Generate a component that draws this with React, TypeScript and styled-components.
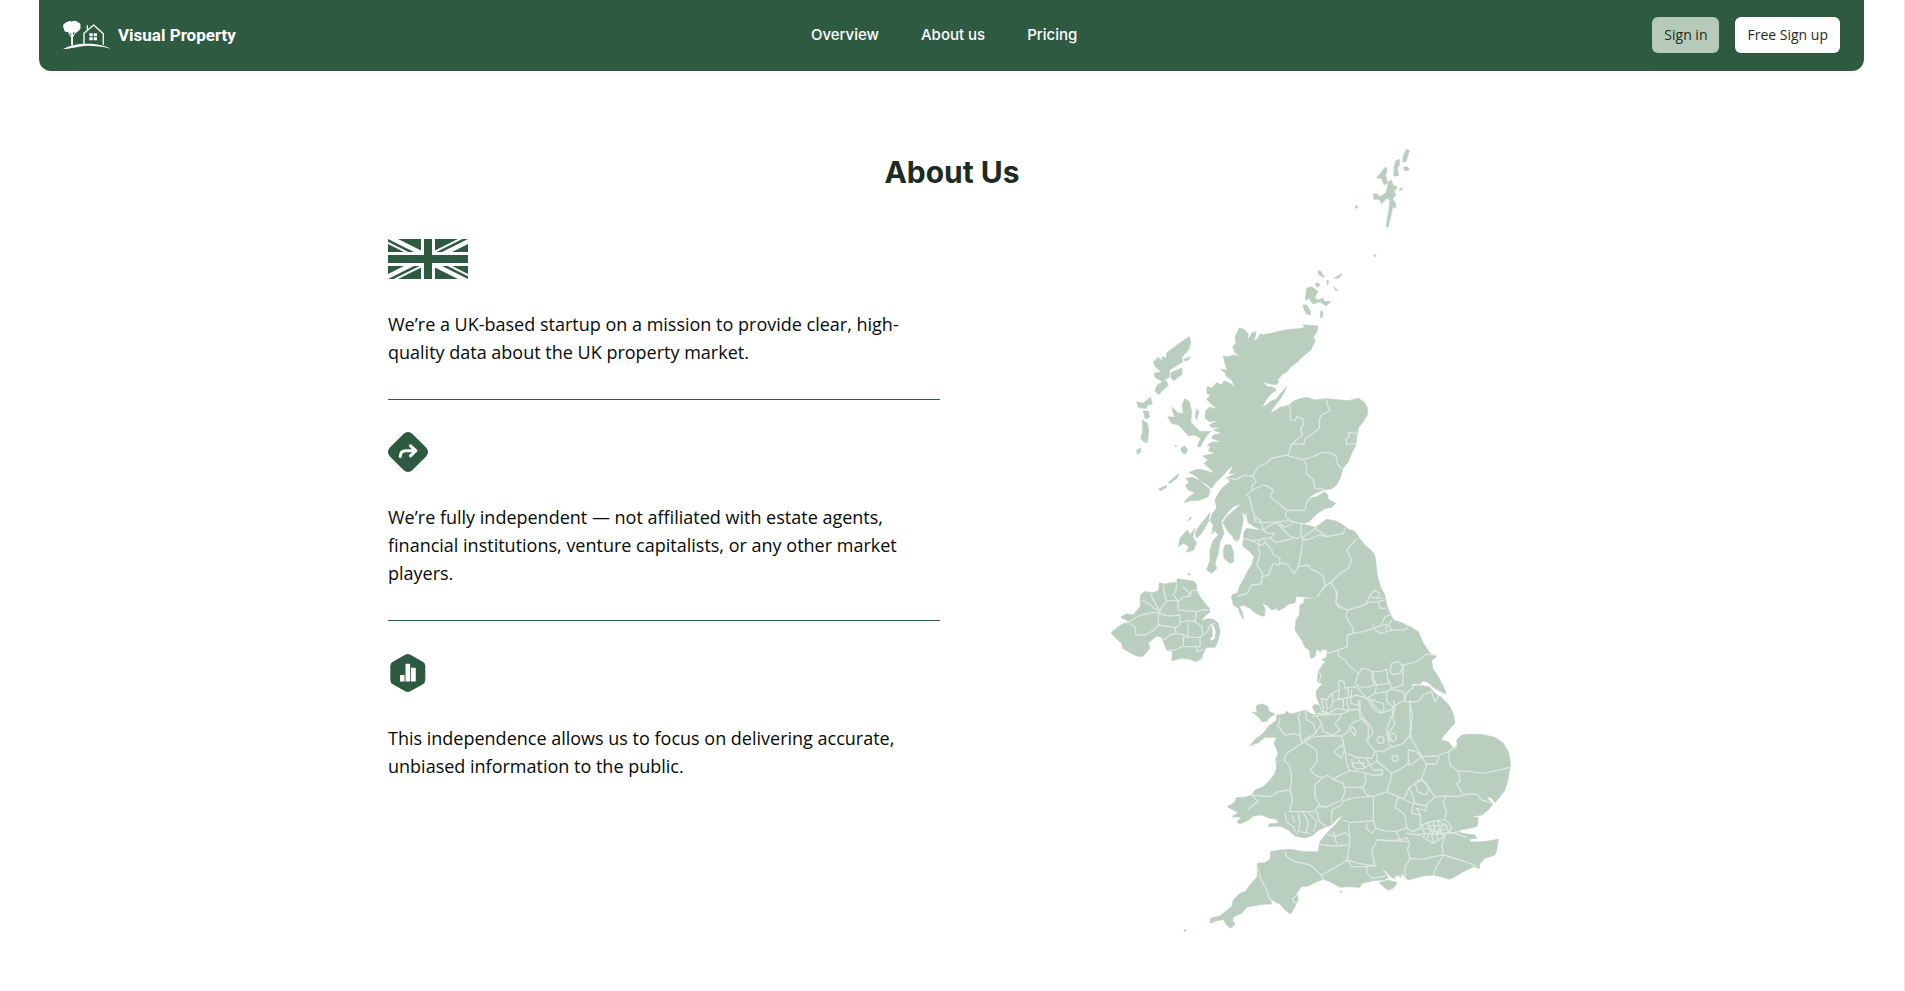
import React from 'react';
import styled, { createGlobalStyle } from 'styled-components';

const colors = {
  forest: '#2f5a42',
  sage: '#b5cab7',
  land: '#b9cebe',
  border: '#dce7df',
  heading: '#1d2b23',
  text: '#050a07',
  line: '#e6e6e6',
};

const GlobalStyle = createGlobalStyle`
  *, *::before, *::after { box-sizing: border-box; }
  body {
    margin: 0;
    background: #fff;
    color: ${colors.text};
    font-family: 'Open Sans', 'Noto Sans', sans-serif;
  }
`;

const Page = styled.div`
  min-height: 100vh;
  border-right: 1px solid ${colors.line};
`;

const Header = styled.header`
  display: flex;
  align-items: center;
  justify-content: space-between;
  margin: 0 40px 0 39px;
  padding: 17px 24px 18px;
  border-radius: 0 0 12px 12px;
  background: ${colors.forest};
`;

const Brand = styled.a`
  display: flex;
  align-items: center;
  gap: 7px;
  color: #fff;
  font: 700 17px/24px Roboto, sans-serif;
  text-decoration: none;
`;

const BrandMark = styled.svg`
  display: block;
  width: 48px;
  height: 30px;
`;

const Nav = styled.nav`
  display: flex;
  gap: 42px;
`;

const NavLink = styled.a`
  color: #fff;
  font: 500 15px/24px Inter, sans-serif;
  text-decoration: none;
`;

const Actions = styled.div`
  display: flex;
  gap: 16px;
`;

const ActionButton = styled.button<{ $muted?: boolean }>`
  height: 36px;
  padding: 0 12px;
  border: 0;
  border-radius: 6px;
  background: ${(p) => (p.$muted ? colors.sage : '#fff')};
  color: ${colors.heading};
  font: 500 14px/20px 'Open Sans', sans-serif;
  cursor: pointer;
`;

const Main = styled.main`
  display: grid;
  grid-template-columns: 1fr 1fr;
  grid-template-rows: auto 1fr;
  column-gap: 24px;
  max-width: 1128px;
  margin: 0 auto;
  padding-top: 59px;
`;

const Title = styled.h1`
  grid-area: 1 / 1 / 2 / 3;
  margin: 0;
  padding: 22px 0 47px;
  color: ${colors.heading};
  font: 700 30px/40px Inter, sans-serif;
  text-align: center;
`;

const Points = styled.ul`
  grid-area: 2 / 1 / 3 / 2;
  margin: 0;
  padding: 0;
  list-style: none;
`;

const Point = styled.li`
  padding-bottom: 33px;

  & + & {
    padding-top: 32px;
    border-top: 1px solid ${colors.forest};
  }
`;

const PointIcon = styled.svg<{ $wide?: boolean }>`
  display: block;
  width: ${(p) => (p.$wide ? 80 : 40)}px;
  height: 40px;
`;

const PointText = styled.p`
  margin: 31px 0 0;
  font-size: 18px;
  line-height: 28px;
`;

const MapDrawing = styled.svg`
  grid-area: 1 / 2 / 3 / 3;
  justify-self: end;
  display: block;
  width: 100%;
  max-width: 416px;
`;

type Sheet = { x: number; y: number; land: string[]; borders: string[] };

/* The map is kept in sheets, each with its own origin. */
const sheets: Sheet[] = [
  {
    // Shetland and Orkney
    x: 570,
    y: 0,
    land: [
      '340,75 350,58 358,62 348,95 338,95',
      '318,92 328,88 328,105 322,115 326,138 312,138 312,112',
      '340,112 352,110 358,120 344,122',
      '275,125 285,112 292,118 287,135 292,160 282,164 275,145 260,144',
      '295,155 305,150 308,165 322,172 312,185 318,195 308,205 318,225 316,235 308,230 302,262 294,292 288,288 296,245 300,210 290,205 275,222 268,208 252,208 250,192 262,192 270,200 288,188 292,175',
      '328,178 336,173 338,177 330,182',
      '195,230 200,226 205,231 199,236',
      '252,376 256,373 258,378 254,380',
      '50,475 65,470 84,485 75,500 80,510 98,505 105,515 122,515 108,528 90,515 68,522 58,505 46,510',
      '38,525 50,525 62,545 60,555 50,552 42,538',
      '90,545 98,543 98,561 92,563',
      '76,462 84,458 90,466 82,472',
      '84,422 92,424 104,442 98,440 86,434',
      '132,446 148,434 157,431 147,444',
      '130,468 142,480 138,483',
      '110,452 116,452 113,466',
    ],
    borders: [],
  },
  {
    // Scotland
    x: 0,
    y: 570,
    land: [
      '418,24 432,28 445,42 442,60 450,50 456,38 468,36 466,50 460,62 472,58 480,42 490,44 520,38 545,32 570,28 600,26 615,22 608,14 628,16 654,18 650,36 640,52 646,62 632,90 618,102 605,112 590,128 575,138 560,156 545,164 535,178 527,176 536,184 530,194 510,192 490,186 498,198 520,202 530,210 515,220 500,238 485,262 500,254 512,244 530,236 540,222 560,200 552,218 540,238 522,260 510,280 525,272 540,262 565,256 580,244 600,236 620,232 645,240 680,236 720,240 745,242 775,235 792,246 802,262 803,282 790,305 776,322 770,350 768,375 755,400 745,425 728,446 722,470 712,492 695,506 672,510 650,518 622,534 650,530 672,516 682,522 685,538 707,550 695,562 675,566 655,578 640,592 630,604 612,610 590,606 570,600 572,606 600,612 625,616 645,622 660,612 680,598 705,602 725,612 745,628 765,634 778,655 795,675 812,690 825,710 828,740 832,770 842,800 855,830 862,872 650,872 655,835 590,828 560,835 412,828 420,795 435,775 445,750 455,735 462,712 450,695 428,678 430,655 432,635 440,625 470,629 492,631 465,622 445,608 440,590 444,572 436,586 425,572 430,600 425,625 418,655 410,665 400,640 390,628 392,645 380,628 368,608 380,590 400,572 425,552 402,558 385,575 363,605 372,640 360,665 355,700 345,730 350,745 335,760 320,750 330,720 330,690 340,660 355,645 345,632 335,642 340,615 330,602 338,580 350,565 345,540 355,520 370,500 390,485 380,474 412,456 388,462 400,436 385,448 365,470 345,490 335,505 318,492 300,482 290,470 268,457 290,448 310,450 345,460 325,442 312,430 325,420 308,408 325,404 345,400 325,392 330,382 350,386 322,376 335,366 365,366 335,355 340,345 366,340 340,330 362,322 335,322 328,315 358,300 330,305 315,295 318,270 330,262 352,268 330,248 320,238 330,226 320,218 322,198 335,205 350,188 365,195 372,182 390,190 405,202 395,180 380,170 375,158 362,148 382,150 375,130 370,108 385,110 400,105 422,110 405,98 398,80 408,70 405,52',
      '258,475 280,472 300,484 330,508 325,530 300,540 270,542 252,548 262,535 285,518 265,510 256,495 268,490',
      '330,578 325,605 305,640 290,655 285,640 300,615',
      '285,625 278,650 290,670 280,690 258,697 268,680 250,670 235,680 240,655 262,630 270,645',
      '375,675 392,674 400,695 402,725 390,730 372,715 370,690',
      '388,614 398,630 410,655 404,662 392,640',
      '255,236 268,245 275,275 272,305 285,320 300,335 332,334 318,350 300,382 292,378 302,355 285,345 265,347 250,330 235,315 215,310 203,290 224,292 215,262 235,280 250,280 246,255',
      '290,266 296,275 290,300 286,290',
      '268,50 272,70 265,90 245,112 248,125 225,140 208,150 208,172 195,178 205,195 190,210 175,224 165,212 172,195 188,185 165,172 162,160 185,155 165,140 160,125 175,112 190,125 185,110 200,115 200,98 225,80 245,65',
      '212,158 245,145 247,162 222,182 214,176',
      '252,118 270,110 268,118 256,124',
      '110,245 130,250 142,240 152,232 157,252 142,256 138,266 115,262',
      '130,272 146,274 148,292 136,297',
      '126,300 142,310 146,330 142,368 130,364 122,355 128,335',
      '110,390 122,384 122,396 112,403',
      '243,385 253,377 263,389 256,403 246,397',
      '225,376 231,378 228,382',
      '175,508 198,496 200,502 182,512',
      '205,488 236,460 232,474 210,490',
      '264,602 272,590 274,596',
      '262,760 272,762 268,766',
    ],
    borders: [
      '568,256 572,280 570,298 585,302 590,290 608,296 610,315 602,325 608,345 590,360 575,372 612,372 615,358 640,340 658,325 658,300 665,285 690,272 682,255 680,238',
      '575,372 565,404',
      '771,340 745,338 748,352 738,356 740,374 768,370',
      '375,475 410,478 430,466 458,468 475,440 495,432 515,415 560,405 580,412 610,418 640,410 665,398 690,398 708,408 712,430 724,446',
      '610,418 620,435 618,460 640,480 645,505 672,508',
      '458,468 468,485 455,498 458,510 440,525 450,535 455,560 462,580 465,605',
      '458,510 490,495 505,500 520,510 510,530 535,550 560,570 590,572 615,570 620,545 635,533',
      '560,570 556,590 572,602',
      '465,605 490,608 530,606 568,602',
      '465,590 482,602 490,630',
      '430,655 455,662 478,658 490,655 510,655 525,640 500,640 490,630 510,615 530,608',
      '530,606 550,630 570,648 590,655 605,650 602,625 605,612',
      '540,612 555,622 580,610',
      '510,655 530,668 560,660 580,655',
      '605,655 625,640 650,622',
      '605,655 620,660 660,645 680,650 730,640 735,625',
      '645,625 680,648',
      '608,655 605,690 595,740 582,762 565,735 545,728 535,735 520,730 505,765 488,770 482,792 455,795 440,822 412,828',
      '478,658 475,680 480,705 470,735 488,760 484,790',
      '490,658 515,690 520,705 540,715 538,730',
      '455,662 480,675 500,668',
      '595,740 625,735 632,748 650,755 670,768 675,798 650,832',
      '772,655 740,690 755,720 745,745 720,760 692,788 672,800',
      '692,788 712,820 708,850 720,866',
    ],
  },
  {
    // Northern Ireland, Galloway and Cumbria
    x: 0,
    y: 1290,
    land: [
      '33,218 55,200 72,190 88,185 62,172 78,162 100,164 120,140 122,105 132,95 160,98 176,92 178,68 195,72 215,68 230,68 232,56 255,60 282,64 290,75 290,92 300,110 315,130 328,145 328,158 310,172 305,182 325,176 340,178 355,190 360,215 355,240 345,262 320,262 310,280 305,295 288,305 270,298 245,295 215,302 218,275 200,270 190,245 185,232 170,228 155,240 145,250 150,265 135,282 128,290 110,288 85,275 68,265 65,250 45,232',
      '500,-5 462,12 440,40 425,70 412,100 400,102 394,110 400,135 415,145 422,165 430,178 428,160 418,140 430,135 450,145 468,160 485,168 494,168 495,145 485,130 500,135 515,150 530,145 535,152 555,142 565,132 585,128 588,108 625,110 655,112 710,60 750,-5',
      '665,104 650,116 612,116 612,128 600,135 598,165 588,180 585,210 605,240 615,262 628,270 632,295 645,290 650,266 660,276 668,268 682,270 680,290 665,300 680,305 668,312 665,322 655,330 652,365 667,372 650,390 648,405 655,425 668,452 690,457 712,445 690,470 880,470 800,260 800,60 710,50',
      '638,438 655,434 662,446 666,466 652,462',
    ],
    borders: [
      '75,190 95,182 110,170 135,162 180,155 160,120 152,100',
      '88,190 105,200 108,225 135,225 160,212 175,195 175,160 190,135 205,122 232,122 235,150',
      '190,75 194,108 200,125',
      '180,150 162,145 145,130 125,120',
      '230,70 228,92 220,105 235,125 250,112 270,108 275,92 290,90',
      '248,80 268,98 268,108',
      '175,160 205,168 240,165 240,195 225,202 175,195',
      '235,150 290,155 305,150 326,150',
      '240,188 265,182 285,185 290,155',
      '225,202 228,220 210,225 190,240',
      '262,190 266,228 228,220',
      '250,230 250,258 225,270 200,272',
      '250,232 300,232 300,260 250,260',
      '300,232 322,215 330,195 345,190',
      '285,185 305,200 308,228',
      '290,262 290,275 312,268',
    ],
  },
  {
    // Eastern side from Berwick to the Wash
    x: 330,
    y: 1110,
    land: [
      '440,110 465,145 492,160 498,190 500,220 510,265 522,280 528,310 538,335 550,360 575,368 600,380 625,395 640,430 660,460 680,470 665,480 668,505 685,530 705,570 708,582 690,574 670,562 655,548 640,542 630,552 610,552 600,560 625,556 658,560 675,580 695,595 715,615 728,640 734,670 715,690 695,712 690,740 380,740 400,450 340,290 380,110',
    ],
    borders: [
      '380,270 378,310 400,325 412,330 450,320 470,310 480,285 495,270',
      '470,308 505,305 524,300',
      '478,288 500,296 520,292',
      '492,272 510,280 500,296',
      '505,305 510,325 527,325',
      '412,330 408,350 415,365 430,385 428,400 460,395 490,385 515,375 525,350 540,345',
      '428,400 412,405 412,440 385,450 350,460',
      '488,375 495,390 512,400 540,392 590,388 592,380',
      '545,360 535,375 548,392',
      '515,378 530,372 528,390',
      '385,455 385,468 405,480 420,500 445,520',
      '680,467 650,462 620,485 600,490 580,495 578,555',
      '445,522 455,505 475,508 485,515 510,515 530,508 535,550 500,555 492,540 490,520',
      '540,515 545,490 565,485 578,500 570,520 550,524 540,515',
      '445,522 435,550 448,560 470,562 495,555 485,535 488,515',
      '445,565 470,595 495,580 500,555',
      '495,580 530,575 545,565 580,555',
      '535,540 545,565',
      '470,595 490,625 510,640 522,630 520,610 500,605 475,595',
      '530,575 530,605 550,620 585,600 580,575 548,568',
      '585,600 590,580 610,562',
      '580,605 600,605 625,605 640,585 665,575 675,605 685,590',
      '598,605 608,650 600,690 605,720',
      '445,600 450,650 475,680 475,720',
      '548,620 548,650 555,670 535,700 545,720',
      '330,595 350,600 365,580 388,570 385,545 395,540 402,548 405,565 430,560 445,565',
      '365,580 370,600 362,625',
      '388,565 385,595 400,600 400,630',
      '415,560 415,590 410,610 418,630',
      '320,640 355,640 380,625 420,632 448,626',
      '425,570 422,610 445,615',
      '365,605 385,598 425,590 440,585 470,595',
      '348,600 352,632',
      '335,600 342,630',
      '325,510 333,528 326,548',
    ],
  },
  {
    // Wales and southern England
    x: 210,
    y: 1710,
    land: [
      '262,15 278,12 292,18 298,35 315,42 300,52 290,64 275,65 265,50 245,36 262,38 258,22',
      '320,45 345,42 350,34 360,42 380,38 405,30 425,42 440,45 428,22 435,12 450,36 475,40 480,-10 812,-10 840,20 850,45 854,68 840,85 820,108 813,120 835,125 850,145 862,135 860,120 875,105 900,103 940,104 975,112 1000,130 1015,155 1022,190 1015,235 1005,270 990,290 975,308 962,292 950,292 968,312 955,330 935,345 915,348 900,352 925,352 922,378 900,385 870,390 870,398 915,405 920,415 895,418 905,426 940,425 985,418 980,450 975,465 945,475 930,490 928,505 910,500 880,515 840,538 815,530 790,525 760,528 715,540 705,532 695,520 692,534 685,522 680,530 672,522 676,538 660,528 645,512 635,508 650,525 655,534 640,540 610,542 575,550 570,562 535,560 510,562 480,545 460,538 440,545 415,558 395,560 380,580 385,598 372,625 362,642 345,630 330,612 315,605 300,595 305,612 290,612 265,615 250,618 230,622 215,640 190,650 188,662 195,672 182,685 170,675 160,658 140,662 120,670 122,655 150,648 165,635 185,620 190,600 210,580 225,575 240,555 262,530 262,490 285,488 300,478 302,455 330,450 360,448 400,455 445,455 450,425 470,400 500,370 522,343 500,358 485,374 465,382 445,390 430,405 405,414 375,408 355,390 330,378 295,380 298,372 325,370 320,358 300,355 275,345 250,348 235,360 210,372 200,365 215,352 185,350 205,338 172,320 190,310 200,293 225,292 245,285 255,270 280,260 300,240 315,220 320,200 318,186 340,180 315,182 325,160 312,130 320,112 285,112 265,128 240,137 255,118 280,100 295,80 320,60',
      '628,548 655,540 682,548 670,564 655,570 642,562',
      '42,690 46,688 48,694 44,695',
      '510,574 516,572 514,578',
    ],
    borders: [
      '330,55 325,80 345,105 375,100 390,108 390,75 385,50 390,38',
      '405,30 410,60 430,70 438,100 410,115 395,130 350,160 342,180 360,200 365,235 360,270 368,300 358,335',
      '390,100 395,130',
      '440,48 455,70 438,98',
      '455,75 460,95 490,105 510,90 495,70 515,45',
      '425,50 450,45 515,42 545,28 570,30',
      '395,130 420,115 435,110 470,108 515,108 525,150 530,190 540,212 510,225 490,238 472,225 455,235',
      '405,128 440,150 442,185 420,210 440,228 455,232',
      '490,155 515,135 525,148 514,175 490,155',
      '515,108 535,95 540,75 555,65 580,55 600,75 610,100 588,120 615,155 605,175 560,172 530,160',
      '540,88 555,108 558,95 548,80 540,88',
      '570,0 570,30 580,55',
      '720,0 720,60 725,85 718,108 700,130 665,142 655,125 650,90 658,65 675,30 670,0',
      '600,0 615,20 640,38 665,28',
      '615,152 640,155 660,142',
      '718,108 745,150 755,170 800,168 835,155 860,140',
      '715,150 715,195 730,190 755,170 740,155 715,150',
      '620,158 622,185 665,220 690,208 715,190',
      '665,220 660,245 650,275',
      '755,170 770,195 755,235 795,290',
      '835,155 840,195 865,215 870,245 860,250 880,285',
      '765,192 798,192 808,170',
      '865,212 900,215 940,220 980,212 1020,202',
      '795,290 830,288 860,290 895,282 920,282 935,300 962,308',
      '540,212 580,218 605,225 635,225 638,210 610,210 600,195 625,182',
      '545,175 548,198 562,208 582,205 598,195 590,175',
      '562,172 570,190 585,190',
      '545,190 575,188 585,205',
      '585,222 588,245 578,262 590,285 610,290 650,275',
      '578,262 525,262',
      '245,285 300,290 325,275 360,270',
      '245,285 265,305 240,322 235,330',
      '358,335 395,335 430,335 445,318 470,322',
      '455,235 435,255 435,290 450,318 470,320 515,300 525,275 520,250 490,238',
      '605,290 560,292 520,302 515,315 485,330 485,370',
      '345,340 350,365 370,380 380,402',
      '385,340 390,370 385,395 420,400',
      '400,335 415,370 408,400',
      '412,335 440,365 430,395',
      '365,345 375,370',
      '440,333 448,365 470,380',
      '610,290 610,362 540,368 520,360',
      '610,362 618,385 605,400 588,385 592,370',
      '618,385 640,392 680,395 690,420 655,422 622,420',
      '535,372 540,412 532,480',
      '450,435 495,438 530,435',
      '470,402 495,410 525,398 540,412',
      '490,395 500,432',
      '680,395 710,382 705,345 675,320 685,290 650,275',
      '685,290 702,298 718,262 755,238',
      '705,300 730,310 725,340 752,345',
      '718,262 735,310 765,318 795,290',
      '735,248 742,275 768,285 778,265 765,245 740,240',
      '752,345 750,378 780,365 825,358 830,335 820,305 828,288',
      '752,345 740,325 768,332 770,315',
      '710,385 730,395 755,382',
      '690,420 710,412 720,430 712,445 720,475',
      '708,400 745,405 760,400',
      '622,420 712,425',
      '622,420 605,450 615,498 565,490 532,480 500,500 455,525',
      '532,480 545,500 590,500 592,520 605,535 648,528',
      '590,500 615,496',
      '345,455 350,470 375,485 420,495 455,525 460,540',
      '262,500 272,535 290,570 300,600',
      '380,586 368,596 372,608 385,606',
      '720,475 760,478 790,470 820,465 815,435 825,412 820,400',
      '720,475 705,500 705,535',
      '820,465 800,500 790,525',
      '820,465 870,480 900,490 920,500',
      '825,358 845,382 835,400 870,395',
      '755,382 765,400 760,412 790,430 815,415 835,395 830,375 800,362 765,370 755,382',
      '762,385 790,388 800,400 830,385',
      '775,368 782,390 772,415',
      '790,365 795,385 785,405 792,428',
      '805,365 808,390 800,410 805,422',
      '818,370 812,395 822,408',
      '765,400 785,402 810,402 830,398',
      '770,378 800,376 826,378',
      '780,395 805,393 815,382',
      '835,395 860,402 890,412',
    ],
  },
];

/* Enclaves inside the Midlands counties: centre x, centre y, radius. */
const enclaves = [
  [632, 120, 10],
  [668, 112, 11],
  [675, 175, 9],
];

function UkMap() {
  return (
    <MapDrawing viewBox="0 0 1248 2430" role="img" aria-label="Map of the United Kingdom">
      <g fill={colors.land} stroke={colors.land} strokeWidth="2" strokeLinejoin="round">
        {sheets.map((s) => (
          <g key={s.y} transform={`translate(${s.x} ${s.y})`}>
            {s.land.map((points) => (
              <polygon key={points} points={points} />
            ))}
          </g>
        ))}
      </g>
      <path transform="translate(0 1290)" fill="#fff" d="M334 194l8 4 5 18-3 20-10 6-4-6 8-7V214z" />
      <g fill="none" stroke={colors.border} strokeWidth="4" strokeLinejoin="round">
        {sheets.map((s) => (
          <g key={s.y} transform={`translate(${s.x} ${s.y})`}>
            {s.borders.map((points) => (
              <polyline key={points} points={points} />
            ))}
          </g>
        ))}
        <g transform="translate(210 1710)">
          {enclaves.map(([x, y, r]) => (
            <circle key={x} cx={x} cy={y} r={r} />
          ))}
        </g>
      </g>
    </MapDrawing>
  );
}

function Logo() {
  return (
    <BrandMark viewBox="99 60 144 90" aria-hidden="true">
      <g fill="#fff">
        <path d="M112 66c4-4 10-4 13-1 5-4 14-3 18 2 7 1 10 7 8 12 2 6-1 12-6 13-2 6-10 8-15 5-4 5-12 5-16-1-7 1-13-3-12-10-5-5-3-15 4-16 1-2 3-4 6-4z" />
        <path d="M124 96h5v40h-6z" />
        <path d="M99 147c18-10 42-16 72-16 30 0 52 5 71 15-24-7-46-9-70-9-28 1-48 10-73 10z" />
        <path d="M178 100h10v9h-10zM191 100h10v9h-10zM178 112h10v9h-10zM191 112h10v9h-10z" />
      </g>
      <g fill="none" stroke="#fff" strokeLinecap="round" strokeLinejoin="round">
        <path strokeWidth="3" d="M126 114l-9-14M127 112l9-14" />
        <path strokeWidth="4" d="M162 131v-31l29-25 29 26v32M172 88V77" />
      </g>
    </BrandMark>
  );
}

function FlagIcon() {
  return (
    <PointIcon $wide viewBox="0 0 80 40" role="img" aria-label="United Kingdom flag">
      <clipPath id="flag-counterchange">
        <path d="M40 20h40v20zM40 20v20H0zM40 20H0V0zM40 20V0h40z" />
      </clipPath>
      <path fill={colors.forest} d="M0 0h80v40H0z" />
      <path stroke="#fff" strokeWidth="9" d="M0 0l80 40M80 0L0 40" />
      <path
        clipPath="url(#flag-counterchange)"
        stroke={colors.forest}
        strokeWidth="5"
        d="M0 0l80 40M80 0L0 40"
      />
      <path stroke="#fff" strokeWidth="14" d="M40 0v40M0 20h80" />
      <path stroke={colors.forest} strokeWidth="8" d="M40 0v40M0 20h80" />
    </PointIcon>
  );
}

function DirectionIcon() {
  return (
    <PointIcon viewBox="0 0 40 40" aria-hidden="true">
      <path
        fill={colors.forest}
        d="M15.500 1.900a6.300 6.300 0 0 1 9 0L38.100 15.500a6.300 6.300 0 0 1 0 9L24.500 38.100a6.300 6.300 0 0 1-9 0L1.900 24.500a6.300 6.300 0 0 1 0-9z"
      />
      <path
        fill="none"
        stroke="#fff"
        strokeWidth="3"
        strokeLinecap="round"
        strokeLinejoin="round"
        d="M12.300 24.500c0-4 2-5.800 5.800-5.800H28M22.500 13.800l5.300 4.900-5.300 5.100"
      />
    </PointIcon>
  );
}

function DataIcon() {
  return (
    <PointIcon viewBox="0 0 40 40" aria-hidden="true">
      <path
        fill={colors.forest}
        d="M17.200 1.800a5 5 0 0 1 5.200 0l12.400 7a5 5 0 0 1 2.500 4.300v13.800a5 5 0 0 1-2.500 4.300l-12.400 7a5 5 0 0 1-5.200 0l-12.400-7a5 5 0 0 1-2.500-4.300V13.100a5 5 0 0 1 2.500-4.300z"
      />
      <path
        fill="#fff"
        d="M12.500 22H16.500v6.600h-4.500V22.500zM17.500 11.500q0-.8.800-.8h3q.8 0 .8.800v17.100h-4.600zM22.900 14.700H27q.8 0 .8.800v12.300q0 .8-.8.800h-4.100z"
      />
    </PointIcon>
  );
}

const points = [
  {
    icon: <FlagIcon />,
    text: 'We’re a UK-based startup on a mission to provide clear, high-quality data about the UK property market.',
  },
  {
    icon: <DirectionIcon />,
    text: 'We’re fully independent — not affiliated with estate agents, financial institutions, venture capitalists, or any other market players.',
  },
  {
    icon: <DataIcon />,
    text: 'This independence allows us to focus on delivering accurate, unbiased information to the public.',
  },
];

export default function App() {
  return (
    <Page>
      <GlobalStyle />
      <Header>
        <Brand href="#home">
          <Logo />
          Visual Property
        </Brand>
        <Nav aria-label="Main">
          <NavLink href="#overview">Overview</NavLink>
          <NavLink href="#about">About us</NavLink>
          <NavLink href="#pricing">Pricing</NavLink>
        </Nav>
        <Actions>
          <ActionButton type="button" $muted>
            Sign in
          </ActionButton>
          <ActionButton type="button">Free Sign up</ActionButton>
        </Actions>
      </Header>
      <Main id="about">
        <Title>About Us</Title>
        <Points>
          {points.map((point) => (
            <Point key={point.text}>
              {point.icon}
              <PointText>{point.text}</PointText>
            </Point>
          ))}
        </Points>
        <UkMap />
      </Main>
    </Page>
  );
}
